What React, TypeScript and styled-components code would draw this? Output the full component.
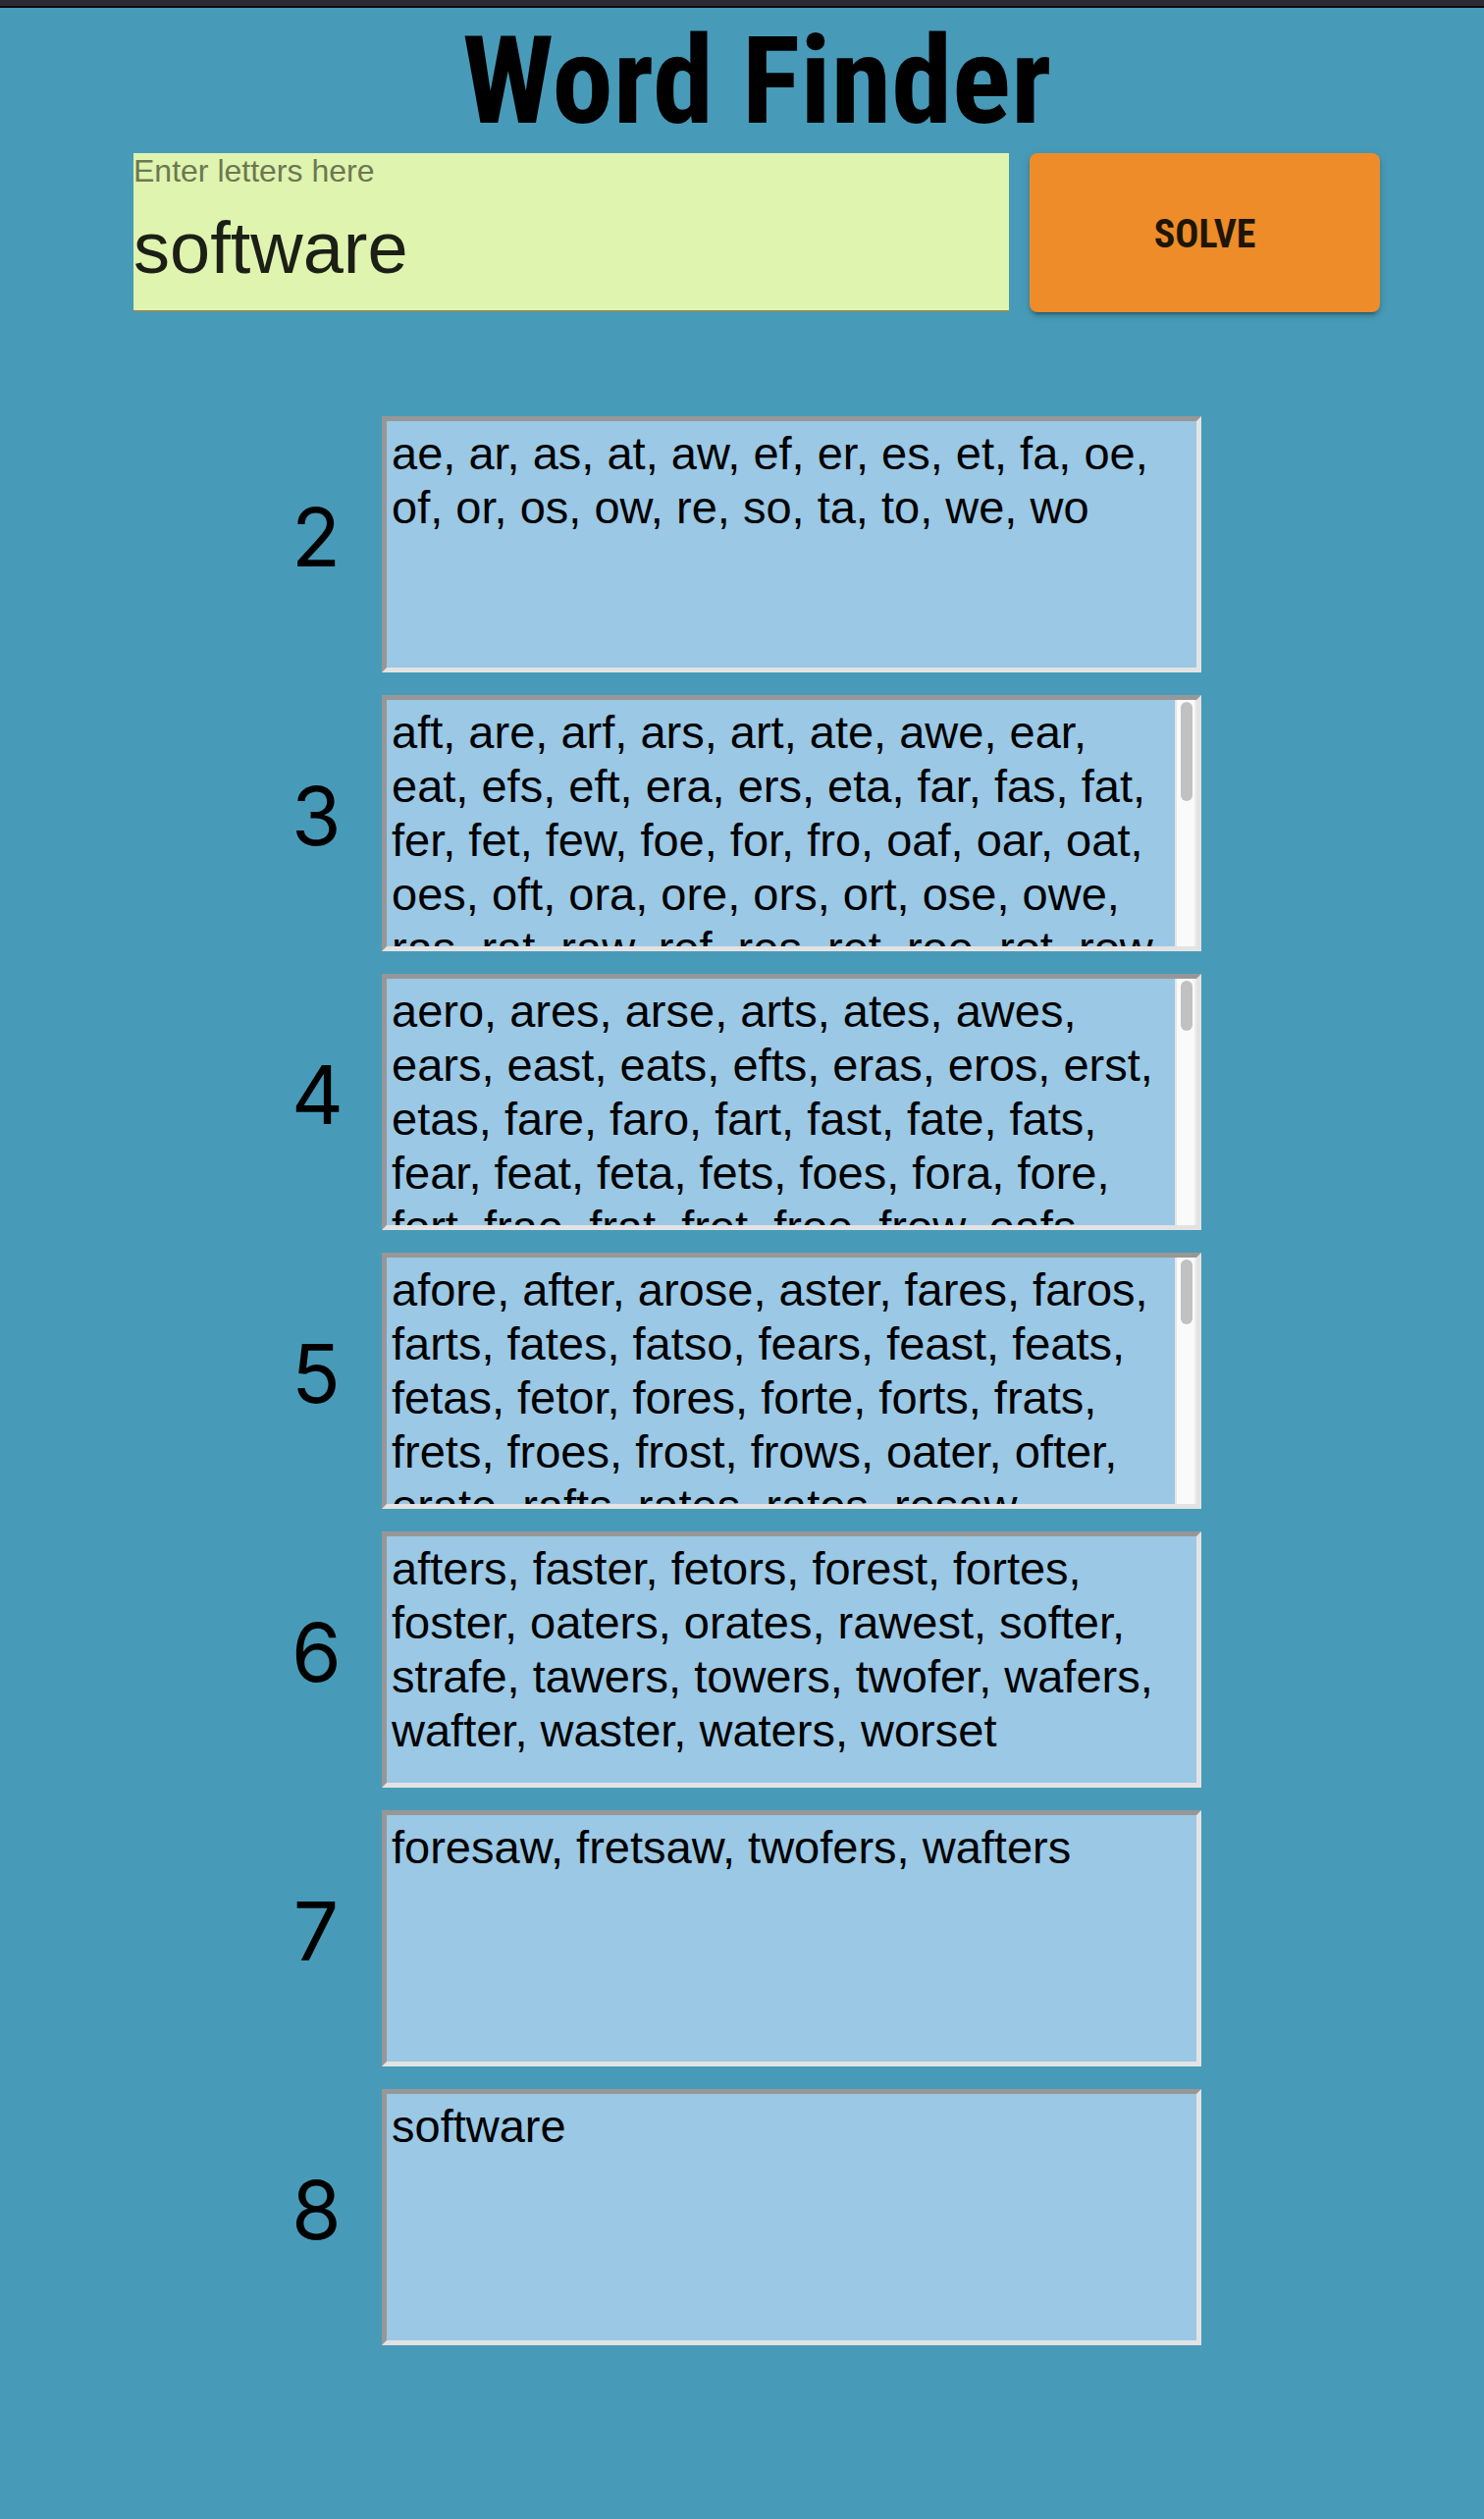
import React, { useLayoutEffect, useRef, useState } from "react";
import styled, { createGlobalStyle } from "styled-components";

const Global = createGlobalStyle`
  *, *::before, *::after { box-sizing: border-box; }
  html { background: #479bb8; }
  body { margin: 0; font-family: "Liberation Sans", Arial, sans-serif; color: #000; }
`;

const WindowEdge = styled.div`
  height: 8px;
  background: #2c2a34;
  border-bottom: 2px solid #0d0d10;
`;

const Page = styled.main`
  padding: 0 106px 176px 136px;
`;

const Title = styled.h1`
  margin: 0;
  height: 148px;
  text-align: center;
  font-family: "Roboto Condensed", "Liberation Sans Narrow", Roboto, sans-serif;
  font-weight: 700;
  font-size: 125px;
  line-height: 150px;
`;

const SearchForm = styled.form`
  display: grid;
  grid-template-columns: 5fr 2fr;
  gap: 21px;
  height: 162px;
`;

const Field = styled.div`
  display: flex;
  flex-direction: column;
  background: #dff4ae;
  border-bottom: 2px solid #828f68;
`;

const FieldLabel = styled.label`
  font-size: 32px;
  line-height: 36px;
  color: #6c7753;
`;

const FieldInput = styled.input`
  flex: 1;
  width: 100%;
  min-width: 0;
  border: 0;
  padding: 0 0 4px;
  outline: 0;
  background: transparent;
  color: #1c1f16;
  font: 74px "Liberation Sans", Arial, sans-serif;
`;

const SolveButton = styled.button`
  border: 0;
  padding: 2px 0 0;
  border-radius: 8px;
  background: #ed8c28;
  color: #1e1505;
  font-family: "Roboto Condensed", "Liberation Sans Narrow", Roboto, sans-serif;
  font-weight: 700;
  font-size: 40px;
  text-transform: uppercase;
  box-shadow: 0 6px 2px -4px rgba(0, 0, 0, 0.2), 0 4px 4px rgba(0, 0, 0, 0.14),
    0 2px 10px rgba(0, 0, 0, 0.12);
`;

const Results = styled.section`
  display: flex;
  flex-direction: column;
  gap: 23px;
  max-width: 948px;
  margin: 106px auto 0;
  padding-right: 21px;
`;

const ResultRow = styled.div`
  display: flex;
  align-items: center;
  gap: 42px;
`;

const LengthLabel = styled.label`
  width: 50px;
  padding-bottom: 14px;
  text-align: center;
  font-family: Inter, Roboto, sans-serif;
  font-size: 82px;
  line-height: 96px;
`;

const BoxFrame = styled.div`
  display: flex;
  flex: 1;
  min-width: 0;
  height: 261px;
  border: 5px solid;
  border-color: #979797 #e3e3e3 #e3e3e3 #979797;
  background: #9ac8e5;
`;

const Words = styled.textarea`
  display: block;
  flex: 1;
  min-width: 0;
  height: 100%;
  padding: 5px;
  border: 0;
  outline: 0;
  resize: none;
  overflow-y: auto;
  scrollbar-width: none;
  background: transparent;
  color: #000;
  font-family: "Liberation Sans", Arial, sans-serif;
  font-size: 47px;
  line-height: 55px;
`;

const ScrollTrack = styled.div`
  width: 22px;
  padding: 2px 2px 2px 4px;
  background: #fafafa;
  border-left: 2px solid #e6e6e6;
  border-right: 2px solid #ededed;
`;

const ScrollThumb = styled.div`
  width: 12px;
  border-radius: 6px;
  background: #c1c1c1;
`;

const groups: { length: number; words: string }[] = [
  {
    length: 2,
    words: "ae ar as at aw ef er es et fa oe of or os ow re so ta to we wo",
  },
  {
    length: 3,
    words:
      "aft are arf ars art ate awe ear eat efs eft era ers eta far fas fat fer fet few foe for fro oaf oar oat oes oft ora ore ors ort ose owe ras rat raw ref res ret roe rot row sae sat saw sea ser set sew sot sow tae tao tar tas taw tea tew toe tor tow twa two wae war was wat wet woe wos wot fae fet oka ate ows raf roo saf sar tef tes wro",
  },
  {
    length: 4,
    words:
      "aero ares arse arts ates awes ears east eats efts eras eros erst etas fare faro fart fast fate fats fear feat feta fets foes fora fore fort frae frat fret froe frow oafs oars oast oats orts osar owes owse raft rase rate rato rats raws reft rest rets roes rose rota rote rots rows safe sate sear seat sera serf seta soar sofa soft sora sore sort star stew stoa stow swat swot tare taro tars taws tear teas tews toea toes tora tore tors tosa tows trow twae twas twos waes waft ware wars wart wast wats wear weft west wets woes wore wort wost wots arfs floe fros ofas orfe rafe sare tefs terf tref wase wate frow trew stae tase wers oese aret arew aews fest feod fows otes rets rowt seow swae tawe teaf tows wafe weta",
  },
  {
    length: 5,
    words:
      "afore after arose aster fares faros farts fates fatso fears feast feats fetas fetor fores forte forts frats frets froes frost frows oater ofter orate rafts rates ratos resaw resow rotas rotes rowts safer serow seraf softa stare stoae store straw strew strow swart swear sweat swore tares taros tarse tawer tears terfs toeas torse tower trews trows twaes wafer wafts wares waste water wears wefts worse worst worts wrast wrest wrote afros aeros fetwa rosta sower sorta sware tawse tewas towse twoer arets aesto foats fraes oates",
  },
  {
    length: 6,
    words:
      "afters faster fetors forest fortes foster oaters orates rawest softer strafe tawers towers twofer wafers wafter waster waters worset",
  },
  { length: 7, words: "foresaw fretsaw twofers wafters" },
  { length: 8, words: "software" },
];

function WordBox({ id, words }: { id: string; words: string }) {
  const ref = useRef<HTMLTextAreaElement>(null);
  const [view, setView] = useState({ client: 1, content: 1, top: 0 });

  const measure = () => {
    const el = ref.current;
    if (el) {
      setView({
        client: el.clientHeight,
        content: el.scrollHeight,
        top: el.scrollTop,
      });
    }
  };

  const scrollable = view.content > view.client;

  useLayoutEffect(() => {
    measure();
    window.addEventListener("resize", measure);
    return () => window.removeEventListener("resize", measure);
  }, [words, scrollable]);

  const ratio = (view.client - 4) / view.content;

  return (
    <BoxFrame>
      <Words
        id={id}
        ref={ref}
        readOnly
        spellCheck={false}
        value={words}
        onScroll={measure}
      />
      {scrollable && (
        <ScrollTrack aria-hidden="true">
          <ScrollThumb
            style={{
              height: Math.round(view.client * ratio),
              marginTop: Math.round(view.top * ratio),
            }}
          />
        </ScrollTrack>
      )}
    </BoxFrame>
  );
}

export default function App() {
  const [letters, setLetters] = useState("software");

  return (
    <>
      <Global />
      <WindowEdge />
      <Page>
        <Title>Word Finder</Title>
        <SearchForm onSubmit={(e) => e.preventDefault()}>
          <Field>
            <FieldLabel htmlFor="letters">Enter letters here</FieldLabel>
            <FieldInput
              id="letters"
              type="text"
              spellCheck={false}
              value={letters}
              onChange={(e) => setLetters(e.target.value)}
            />
          </Field>
          <SolveButton type="submit">Solve</SolveButton>
        </SearchForm>
        <Results>
          {groups.map(({ length, words }) => (
            <ResultRow key={length}>
              <LengthLabel htmlFor={`words-${length}`}>{length}</LengthLabel>
              <WordBox
                id={`words-${length}`}
                words={words.split(" ").join(", ")}
              />
            </ResultRow>
          ))}
        </Results>
      </Page>
    </>
  );
}
